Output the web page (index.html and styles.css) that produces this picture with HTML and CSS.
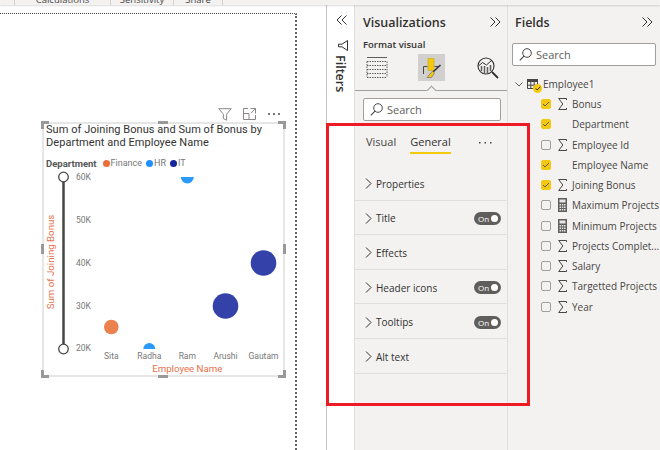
FILE: index.html
```html
<!DOCTYPE html>
<html lang="en">
<head>
    <meta charset="UTF-8">
    <title>Format visual</title>
    <link rel="stylesheet" href="styles.css">
</head>
<body>

<div class="ribbon">
    <span class="rtab rtab-calc">Calculations</span>
    <span class="rtab rtab-sens">Sensitivity</span>
    <span class="rtab rtab-share">Share</span>
</div>

<div class="main">
    <div class="canvas">
        <div class="page">
            <div class="vis-header">
                <svg width="14" height="13" viewBox="0 0 14 13"><path d="M.7.7h12.6L8.6 6.2v6L5.4 10.6V6.2z" fill="none" stroke="#8a8886"/></svg>
                <svg width="13" height="12" viewBox="0 0 13 12"><path d="M5 .5H.5v11h12V7M.5 5.500h5.500v6M7.500.5h5v5M12.300.7L8 5" fill="none" stroke="#8a8886"/></svg>
                <svg width="13" height="3" viewBox="0 0 13 3"><path d="M1 0h2v2H1zM6 0h2v2H6zM11 0h2v2h-2z" fill="#777"/></svg>
            </div>
            <div class="visual">
                <i class="grip tl"></i><i class="grip tr"></i><i class="grip bl"></i><i class="grip br"></i>
                <i class="grip tm"></i><i class="grip bm"></i><i class="grip lm"></i><i class="grip rm"></i>
                <div class="vis-title">Sum of Joining Bonus and Sum of Bonus by Department and Employee Name</div>
                <div class="legend">
                    <b>Department</b>
                    <span class="leg-item"><i class="dot finance"></i>Finance</span>
                    <span class="leg-item"><i class="dot hr"></i>HR</span>
                    <span class="leg-item"><i class="dot it"></i>IT</span>
                </div>
                <svg class="plot" width="240" height="214" viewBox="44 164 240 214">
                    <defs>
                        <clipPath id="plotClip"><rect x="90" y="176" width="192" height="172"/></clipPath>
                    </defs>
                    <text class="axis-title" transform="translate(54 261) rotate(-90)" text-anchor="middle">Sum of Joining Bonus</text>
                    <path d="M63.500 176V348" stroke="#484644" stroke-width="2.500"/>
                    <circle cx="63.500" cy="176" r="4.800" fill="#fff" stroke="#484644" stroke-width="1.300"/>
                    <circle cx="63.500" cy="348" r="4.800" fill="#fff" stroke="#484644" stroke-width="1.300"/>
                    <g class="tick">
                        <text x="76" y="179">60K</text>
                        <text x="76" y="222">50K</text>
                        <text x="76" y="265">40K</text>
                        <text x="76" y="308">30K</text>
                        <text x="76" y="350">20K</text>
                    </g>
                    <g clip-path="url(#plotClip)">
                        <circle cx="187.300" cy="176" r="6.500" fill="#2b9bfb"/>
                        <circle cx="111.300" cy="326" r="7.300" fill="#eb814f"/>
                        <circle cx="149.300" cy="348" r="6" fill="#2b9bfb"/>
                        <circle cx="225.500" cy="305" r="12.800" fill="#3341a9"/>
                        <circle cx="263.500" cy="262" r="12.800" fill="#3341a9"/>
                    </g>
                    <g class="tick" text-anchor="middle">
                        <text x="111.300" y="358">Sita</text>
                        <text x="149.300" y="358">Radha</text>
                        <text x="187.300" y="358">Ram</text>
                        <text x="225.500" y="358">Arushi</text>
                        <text x="263.500" y="358">Gautam</text>
                    </g>
                    <text class="axis-title" x="187.300" y="371" text-anchor="middle">Employee Name</text>
                </svg>
            </div>
        </div>
    </div>

    <div class="filters">
        <svg width="11" height="10" viewBox="0 0 11 10"><path d="M5.500.5L1 5l4.500 4.500M10.500.5L6 5l4.500 4.500" fill="none" stroke="#323130"/></svg>
        <svg class="filter-icon" width="10" height="11" viewBox="0 0 10 11"><path d="M9.500.5v10L4 6.800H.5V4.200H4z" fill="none" stroke="#323130"/></svg>
        <span class="filters-label">Filters</span>
    </div>

    <div class="viz">
        <div class="pane-head">
            <span class="pane-title">Visualizations</span>
            <svg width="11" height="10" viewBox="0 0 11 10"><path d="M.5.500L5 5 .5 9.500M5.500.5L10 5 5.500 9.500" fill="none" stroke="#323130"/></svg>
        </div>
        <div class="format-label">Format visual</div>
        <div class="format-icons">
            <svg width="22" height="21" viewBox="0 0 22 21"><path d="M1 .5h20" fill="none" stroke="#605e5c"/><path d="M1 4.500h20M1 8.500h20M1 12.500h20M1 16.500h20M1 20.500h20M1 4.500V20M21 4.500V20" fill="none" stroke="#605e5c" stroke-dasharray="1.500 1"/></svg>
            <span class="fmt-active">
                <svg width="21" height="22" viewBox="0 0 21 22">
                    <path d="M7 1.500h6v12H7z" fill="#f2c811" stroke="#c8a60a" stroke-width=".6"/>
                    <path d="M6.500 9.500h-4V17M13.500 9.500H17" fill="none" stroke="#484644"/>
                    <path d="M19.500 8L12 15" fill="none" stroke="#323130" stroke-width="1.600"/>
                    <path d="M11.500 14l2 2-3 4.500H6z" fill="#f2c811" stroke="#605e5c" stroke-width=".6"/>
                </svg>
            </span>
            <svg width="22" height="22" viewBox="0 0 22 22">
                <circle cx="9" cy="9" r="8" fill="none" stroke="#323130" stroke-width="1.100"/>
                <path d="M1.500 9l4-3.500 4 2.500 5-4.500 2 2" fill="none" stroke="#323130"/>
                <path d="M4.500 9v5M7.500 9v7M10.500 10v6M13.500 8v6" fill="none" stroke="#605e5c" stroke-width="1.500"/>
                <path d="M15 15l6 6" stroke="#323130" stroke-width="1.800"/>
            </svg>
        </div>
        <div class="notch-line"><i class="notch"></i></div>
        <div class="search search-viz">
            <svg width="13" height="13" viewBox="0 0 13 13"><circle cx="8" cy="5" r="4.300" fill="none" stroke="#484644"/><path d="M5 8.200L.8 12.400" stroke="#484644" stroke-width="1.100"/></svg>
            <span>Search</span>
        </div>
        <div class="tabs">
            <span class="tab">Visual</span>
            <span class="tab tab-on">General</span>
            <svg class="tab-more" width="13" height="2" viewBox="0 0 13 2"><path d="M0 0h1.500v1.500H0zM5.500 0H7v1.500H5.500zM11 0h1.500v1.500H11z" fill="#484644"/></svg>
        </div>
        <div class="cards">
            <div class="card"><svg class="chev" width="7" height="11" viewBox="0 0 7 11"><path d="M1 .5l5 5-5 5" fill="none" stroke="#323130"/></svg><span>Properties</span></div>
            <div class="card"><svg class="chev" width="7" height="11" viewBox="0 0 7 11"><path d="M1 .5l5 5-5 5" fill="none" stroke="#323130"/></svg><span>Title</span><span class="toggle">On<i></i></span></div>
            <div class="card"><svg class="chev" width="7" height="11" viewBox="0 0 7 11"><path d="M1 .5l5 5-5 5" fill="none" stroke="#323130"/></svg><span>Effects</span></div>
            <div class="card"><svg class="chev" width="7" height="11" viewBox="0 0 7 11"><path d="M1 .5l5 5-5 5" fill="none" stroke="#323130"/></svg><span>Header icons</span><span class="toggle">On<i></i></span></div>
            <div class="card"><svg class="chev" width="7" height="11" viewBox="0 0 7 11"><path d="M1 .5l5 5-5 5" fill="none" stroke="#323130"/></svg><span>Tooltips</span><span class="toggle">On<i></i></span></div>
            <div class="card"><svg class="chev" width="7" height="11" viewBox="0 0 7 11"><path d="M1 .5l5 5-5 5" fill="none" stroke="#323130"/></svg><span>Alt text</span></div>
        </div>
    </div>

    <div class="fields">
        <div class="pane-head">
            <span class="pane-title">Fields</span>
            <svg width="11" height="10" viewBox="0 0 11 10"><path d="M.5.500L5 5 .5 9.500M5.500.5L10 5 5.500 9.500" fill="none" stroke="#323130"/></svg>
        </div>
        <div class="search search-fields">
            <svg width="13" height="13" viewBox="0 0 13 13"><circle cx="8" cy="5" r="4.300" fill="none" stroke="#484644"/><path d="M5 8.200L.8 12.400" stroke="#484644" stroke-width="1.100"/></svg>
            <span>Search</span>
        </div>
        <div class="table-row">
            <svg width="8" height="5" viewBox="0 0 8 5"><path d="M.5.500L4 4 7.500.5" fill="none" stroke="#605e5c"/></svg>
            <span class="table-icon">
                <svg width="11" height="10" viewBox="0 0 11 10"><path d="M0 0h11v3H0z" fill="#484644"/><path d="M.5 3v6.500h10V3M3.800 3v6.500M7.200 3v6.500M.5 6.200h10" fill="none" stroke="#484644"/></svg>
                <i class="table-badge"><svg width="6" height="5" viewBox="0 0 6 5"><path d="M.7 2.500l1.500 1.500L5.300.7" fill="none" stroke="#323130"/></svg></i>
            </span>
            <span>Employee1</span>
        </div>
        <ul class="field-list">
            <li><i class="cb on"></i><svg class="sigma" width="9" height="12" viewBox="0 0 9 12"><path d="M8.500 2V.5H.7L4.800 6 .7 11.500h7.800V10" fill="none" stroke="#484644"/></svg>Bonus</li>
            <li><i class="cb on"></i><i class="noicon"></i>Department</li>
            <li><i class="cb"></i><svg class="sigma" width="9" height="12" viewBox="0 0 9 12"><path d="M8.500 2V.5H.7L4.800 6 .7 11.500h7.800V10" fill="none" stroke="#484644"/></svg>Employee Id</li>
            <li><i class="cb on"></i><i class="noicon"></i>Employee Name</li>
            <li><i class="cb on"></i><svg class="sigma" width="9" height="12" viewBox="0 0 9 12"><path d="M8.500 2V.5H.7L4.800 6 .7 11.500h7.800V10" fill="none" stroke="#484644"/></svg>Joining Bonus</li>
            <li><i class="cb"></i><svg class="sigma" width="9" height="14" viewBox="0 0 9 14"><path d="M0 0h9v14H0z" fill="#605e5c"/><path d="M1.500 1.500h6v3h-6zM1.500 6h1.500v1.500H1.500zM3.800 6h1.500v1.500H3.800zM6 6h1.500v1.500H6zM1.500 8.500h1.500V10H1.500zM3.800 8.500h1.500V10H3.800zM6 8.500h1.500V10H6zM1.500 11h1.500v1.500H1.500zM3.800 11h1.500v1.500H3.800zM6 11h1.500v1.500H6z" fill="#e8e6e4"/></svg>Maximum Projects</li>
            <li><i class="cb"></i><svg class="sigma" width="9" height="14" viewBox="0 0 9 14"><path d="M0 0h9v14H0z" fill="#605e5c"/><path d="M1.500 1.500h6v3h-6zM1.500 6h1.500v1.500H1.500zM3.800 6h1.500v1.500H3.800zM6 6h1.500v1.500H6zM1.500 8.500h1.500V10H1.500zM3.800 8.500h1.500V10H3.800zM6 8.500h1.500V10H6zM1.500 11h1.500v1.500H1.500zM3.800 11h1.500v1.500H3.800zM6 11h1.500v1.500H6z" fill="#e8e6e4"/></svg>Minimum Projects</li>
            <li><i class="cb"></i><svg class="sigma" width="9" height="12" viewBox="0 0 9 12"><path d="M8.500 2V.5H.7L4.800 6 .7 11.500h7.800V10" fill="none" stroke="#484644"/></svg>Projects Complet...</li>
            <li><i class="cb"></i><svg class="sigma" width="9" height="12" viewBox="0 0 9 12"><path d="M8.500 2V.5H.7L4.800 6 .7 11.500h7.800V10" fill="none" stroke="#484644"/></svg>Salary</li>
            <li><i class="cb"></i><svg class="sigma" width="9" height="12" viewBox="0 0 9 12"><path d="M8.500 2V.5H.7L4.800 6 .7 11.500h7.800V10" fill="none" stroke="#484644"/></svg>Targetted Projects</li>
            <li><i class="cb"></i><svg class="sigma" width="9" height="12" viewBox="0 0 9 12"><path d="M8.500 2V.5H.7L4.800 6 .7 11.500h7.800V10" fill="none" stroke="#484644"/></svg>Year</li>
        </ul>
    </div>
</div>

<div class="red-box"></div>

</body>
</html>
```

FILE: styles.css
```css
html, body {
    margin: 0;
    padding: 0;
}
body {
    width: 660px;
    height: 450px;
    overflow: hidden;
    position: relative;
    background: #fff;
    font-family: "Open Sans", sans-serif;
    color: #323130;
}
svg {
    display: block;
    flex: none;
}
i {
    display: block;
}

/* ribbon, only its lower edge is in view */
.ribbon {
    height: 5px;
    background: #f3f2f1;
    box-shadow: 0 1px 2px rgba(0, 0, 0, 0.14);
    overflow: hidden;
    display: flex;
    font-size: 9.500px;
    line-height: 10px;
    color: #484644;
    position: relative;
}
.rtab {
    margin-top: -5px;
    height: 10px;
    border-right: 1px solid #d2d0ce;
    text-align: center;
}
.rtab-calc { margin-left: 14px; border-left: 1px solid #d2d0ce; width: 95px; }
.rtab-sens { width: 62px; }
.rtab-share { width: 48px; }

.main {
    display: flex;
    height: 445px;
}

/* report canvas */
.canvas {
    width: 326px;
    flex: none;
    border-right: 1px solid #c8c6c4;
}
.page {
    width: 297px;
    height: 437px;
    box-sizing: border-box;
    margin-top: 8px;
    border-top: 1px dotted #444;
    border-right: 2px dotted #666;
    padding-left: 42px;
}
.vis-header {
    width: 241px;
    margin-top: 93px;
    height: 14px;
    display: flex;
    justify-content: flex-end;
    align-items: center;
    gap: 11px;
    padding-right: 3px;
    box-sizing: border-box;
}
.visual {
    position: relative;
    width: 243px;
    height: 255px;
    margin-top: 1px;
    box-sizing: border-box;
    border: 2px solid #e6e6e6;
    background: #fff;
    padding: 0 0 0 2px;
}
.grip {
    position: absolute;
    background: #999;
}
.tl, .tr, .bl, .br {
    width: 8px;
    height: 8px;
    background: none;
    border: 0 solid #999;
    box-sizing: border-box;
}
.tl { left: -3px; top: -3px; border-width: 3px 0 0 3px; }
.tr { right: -3px; top: -3px; border-width: 3px 3px 0 0; }
.bl { left: -3px; bottom: -3px; border-width: 0 0 3px 3px; }
.br { right: -3px; bottom: -3px; border-width: 0 3px 3px 0; }
.tm, .bm { left: 114px; width: 10px; height: 3px; }
.tm { top: -3px; }
.bm { bottom: -3px; }
.lm, .rm { top: 120px; width: 3px; height: 10px; }
.lm { left: -3px; }
.rm { right: -3px; }

.vis-title {
    font-family: Roboto, sans-serif;
    font-size: 11px;
    letter-spacing: 0.05px;
    line-height: 12.500px;
    color: #333;
    width: 236px;
}
.legend {
    display: flex;
    align-items: center;
    height: 12px;
    margin-top: 8px;
    font-family: Roboto, sans-serif;
    font-size: 9px;
    color: #777;
}
.legend b {
    color: #555;
    font-size: 9.500px;
    margin-right: 6px;
    font-weight: 700;
}
.leg-item {
    display: flex;
    align-items: center;
    gap: 1px;
    margin-right: 4px;
}
.dot {
    width: 7px;
    height: 7px;
    border-radius: 50%;
}
.finance { background: #e9703a; }
.hr { background: #1d8fff; }
.it { background: #15249b; }
.plot {
    margin-left: -2px;
    margin-top: -4px;
    font-family: Roboto, sans-serif;
}
.axis-title {
    font-size: 9.700px;
    fill: #e8704a;
}
.tick {
    font-size: 8.500px;
    fill: #777;
}

/* filters strip */
.filters {
    width: 28px;
    flex: none;
    box-sizing: border-box;
    padding: 10px 0 0 9px;
    background: #fff;
    border-right: 1px solid #e1dfdd;
}
.filter-icon {
    margin: 15px 0 0 2px;
}
.filters-label {
    display: block;
    writing-mode: vertical-rl;
    font-size: 12.500px;
    font-weight: 600;
    margin: 4px 0 0 -3px;
    line-height: 14px;
}

/* panes */
.viz {
    width: 153px;
    flex: none;
    background: #f3f2f1;
    border-right: 1px solid #e1dfdd;
    box-sizing: border-box;
}
.fields {
    flex: 1;
    background: #f3f2f1;
}
.pane-head {
    display: flex;
    justify-content: space-between;
    align-items: center;
    height: 18px;
    margin-top: 8px;
    padding: 0 7px;
}
.viz .pane-head {
    padding: 0 6px 0 8px;
}
.pane-title {
    font-size: 12.500px;
    font-weight: 600;
}
.format-label {
    font-size: 9.500px;
    font-weight: 600;
    margin: 8px 0 0 8px;
    line-height: 12px;
}
.format-icons {
    display: flex;
    align-items: center;
    height: 27px;
    margin-top: 3px;
    padding-left: 11px;
}
.fmt-active {
    width: 27px;
    height: 27px;
    background: #d2d0ce;
    margin: 0 32px 0 30px;
    display: flex;
    align-items: center;
    justify-content: center;
}
.notch-line {
    position: relative;
    height: 1px;
    margin-top: 9px;
    background: #a19f9d;
}
.notch {
    position: absolute;
    left: 73px;
    top: -3px;
    width: 6px;
    height: 6px;
    background: #f3f2f1;
    border: solid #a19f9d;
    border-width: 1px 0 0 1px;
    transform: rotate(45deg);
}
.search {
    display: flex;
    align-items: center;
    gap: 4px;
    height: 23px;
    box-sizing: border-box;
    background: #fff;
    border: 1px solid #a19f9d;
    border-radius: 2px;
    font-size: 11px;
    color: #605e5c;
    padding-left: 6px;
}
.search-viz {
    margin: 7px 6px 0 8px;
}
.search-fields {
    margin: 12px 4px 0 4px;
}
.tabs {
    display: flex;
    align-items: flex-start;
    margin-top: 13px;
    padding-left: 11px;
    height: 20px;
    font-size: 11px;
    line-height: 16px;
}
.tab {
    margin-right: 14px;
    color: #484644;
    padding-bottom: 2px;
}
.tab-on {
    color: #323130;
    border-bottom: 2px solid #f2c811;
    font-weight: 500;
}
.tab-more {
    margin: 8px 0 0 14px;
}
.cards {
    margin-top: 12px;
}
.card {
    display: flex;
    align-items: center;
    height: 34.600px;
    box-sizing: border-box;
    border-bottom: 1px solid #e1dfdd;
    font-size: 10px;
    font-weight: 500;
    padding: 2px 6px 0 10px;
}
.chev {
    margin-right: 4px;
}
.toggle {
    margin-left: auto;
    width: 27px;
    height: 13px;
    border-radius: 7px;
    background: #605e5c;
    color: #fff;
    font-size: 8px;
    line-height: 13px;
    padding-left: 4px;
    box-sizing: border-box;
    display: flex;
    align-items: center;
    justify-content: space-between;
    padding-right: 3px;
}
.toggle i {
    width: 7px;
    height: 7px;
    border-radius: 50%;
    background: #fff;
}

/* fields tree */
.table-row {
    display: flex;
    align-items: center;
    height: 14px;
    margin-top: 11px;
    padding-left: 7px;
    font-size: 10px;
    color: #484644;
}
.table-icon {
    position: relative;
    margin: 0 5px 0 4px;
}
.table-badge {
    position: absolute;
    left: 6px;
    top: 5px;
    width: 9px;
    height: 9px;
    border-radius: 50%;
    background: #f2c811;
    display: flex;
    align-items: center;
    justify-content: center;
}
.field-list {
    list-style: none;
    margin: 3px 0 0;
    padding: 0 0 0 33px;
}
.field-list li {
    display: flex;
    align-items: center;
    height: 20.250px;
    font-size: 10px;
    color: #484644;
    white-space: nowrap;
}
.cb {
    width: 10px;
    height: 10px;
    box-sizing: border-box;
    border: 1px solid #a19f9d;
    border-radius: 2px;
    background: #f3f2f1;
    margin-right: 7px;
    flex: none;
}
.cb.on {
    border-color: #f2c811;
    background: #f2c811 url("data:image/svg+xml,%3Csvg xmlns='http://www.w3.org/2000/svg' width='8' height='8'%3E%3Cpath d='M1 4l2 2 4-4' fill='none' stroke='%23605e5c'/%3E%3C/svg%3E") center no-repeat;
}
.sigma, .noicon {
    width: 9px;
    margin-right: 5px;
    flex: none;
}

/* annotation drawn on top of the screenshot */
.red-box {
    position: absolute;
    left: 326px;
    top: 123px;
    width: 204px;
    height: 283px;
    box-sizing: border-box;
    border: 3px solid #ed1c24;
}
```
